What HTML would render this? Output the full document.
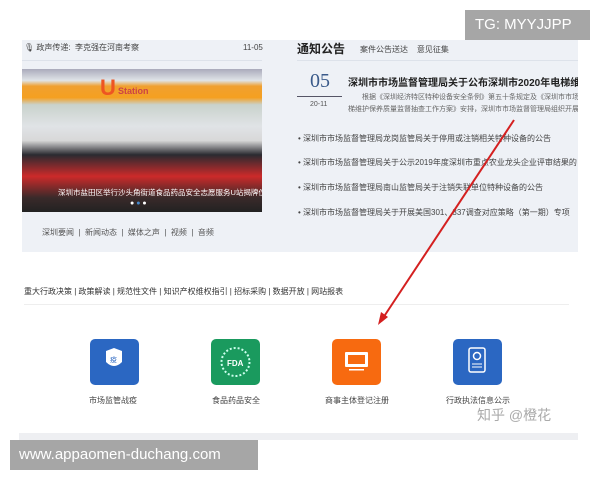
<!DOCTYPE html><html><head><meta charset="utf-8"><style>
body{margin:0;width:600px;height:480px;background:#fff;position:relative;overflow:hidden;font-family:"Liberation Sans","Noto Sans CJK SC",sans-serif}
.a{position:absolute;white-space:nowrap}
.s{font-size:8px;color:#444}
</style></head><body>
<div class="a" style="left:22px;top:40px;width:556px;height:212px;background:#eef1f6"></div>
<div class="a" style="left:19px;top:433px;width:559px;height:7px;background:#eeeff2"></div>
<div class="a s" style="left:24px;top:42px">🎙 政声传递:&nbsp; 李克强在河南考察</div>
<div class="a s" style="left:243px;top:43px">11-05</div>
<div class="a" style="left:22px;top:60px;width:240px;height:1px;background:#dde2ea"></div>
<div class="a" style="left:22px;top:69px;width:240px;height:143px;overflow:hidden;background:linear-gradient(180deg,#aab 0,#dfe4e8 8%,#f0a030 12%,#f5a020 20%,#c9d2cc 25%,#e0e3e6 40%,#d8d8d8 50%,#2a2a30 60%,#cc2a2a 75%,#3a2a2a 90%,#222 100%)">
<div class="a" style="left:78px;top:6px;font-size:22px;color:#e52;font-weight:bold">U</div>
<div class="a" style="left:96px;top:17px;font-size:9px;color:#c44;font-weight:bold">Station</div>
<div class="a" style="left:36px;top:118px;font-size:7.5px;color:#fff">深圳市盐田区举行沙头角街道食品药品安全志愿服务U站揭牌仪式</div>
<div class="a" style="left:108px;top:131px;font-size:7px;color:#fff">● <span style="color:#48c">●</span> ●</div>
</div>
<div class="a s" style="left:42px;top:227px;color:#555">深圳要闻 &nbsp;|&nbsp; 新闻动态 &nbsp;|&nbsp; 媒体之声 &nbsp;|&nbsp; 视频 &nbsp;|&nbsp; 音频</div>
<div class="a" style="left:297px;top:40px;font-size:12px;font-weight:bold;color:#222">通知公告</div>
<div class="a s" style="left:360px;top:44px">案件公告送达 &nbsp;&nbsp; 意见征集</div>
<div class="a" style="left:297px;top:60px;width:281px;height:1px;background:#dde2ea"></div>
<div class="a" style="left:310px;top:70px;font-size:20px;color:#3a5a8a;font-family:'Liberation Serif',serif">05</div>
<div class="a" style="left:297px;top:96px;width:45px;height:1px;background:#556"></div>
<div class="a" style="left:310px;top:101px;font-size:7px;color:#555">20-11</div>
<div class="a" style="left:297px;top:60px;width:281px;height:180px;overflow:hidden">
<div class="a" style="left:51px;top:14px;font-size:10px;font-weight:bold;color:#222">深圳市市场监督管理局关于公布深圳市2020年电梯维护保</div>
<div class="a" style="left:65px;top:32px;font-size:7px;color:#666">根据《深圳经济特区特种设备安全条例》第五十条规定及《深圳市市场</div>
<div class="a" style="left:51px;top:44px;font-size:7px;color:#666">梯维护保养质量监督抽查工作方案》安排，深圳市市场监督管理局组织开展</div>
<div class="a s" style="left:1px;top:73px">• 深圳市市场监督管理局龙岗监管局关于停用或注销相关特种设备的公告</div>
<div class="a s" style="left:1px;top:97px">• 深圳市市场监督管理局关于公示2019年度深圳市重点农业龙头企业评审结果的</div>
<div class="a s" style="left:1px;top:122px">• 深圳市市场监督管理局南山监管局关于注销失联单位特种设备的公告</div>
<div class="a s" style="left:1px;top:147px">• 深圳市市场监督管理局关于开展美国301、337调查对应策略（第一期）专项</div>
</div>
<div class="a s" style="left:24px;top:286px;color:#333">重大行政决策 | 政策解读 | 规范性文件 | 知识产权维权指引 | 招标采购 | 数据开放 | 网站报表</div>
<div class="a" style="left:24px;top:304px;width:545px;height:1px;background:#eee"></div>
<div class="a" style="left:90px;top:339px;width:49px;height:46px;background:#2b67c2;border-radius:5px"></div>
<div class="a" style="left:211px;top:339px;width:49px;height:46px;background:#1a9a5e;border-radius:5px"></div>
<div class="a" style="left:332px;top:339px;width:49px;height:46px;background:#f76a10;border-radius:5px"></div>
<div class="a" style="left:453px;top:339px;width:49px;height:46px;background:#2b67c2;border-radius:5px"></div>
<svg class="a" style="left:0;top:0" width="600" height="480">
<path d="M106 351 L114 348 L122 351 L122 362 Q114 370 106 362Z" fill="#fff"/><text x="110" y="362" font-size="7" fill="#2b67c2">疫</text>
<circle cx="235.5" cy="362" r="14" fill="none" stroke="#cfe" stroke-width="2" stroke-dasharray="2 2"/><text x="227" y="366" font-size="8" font-weight="bold" fill="#fff" font-family="Liberation Sans">FDA</text>
<rect x="345" y="352" width="23" height="15" rx="1" fill="#fff"/><rect x="348" y="355" width="17" height="9" fill="#f76a10"/><rect x="349" y="369" width="15" height="1.5" fill="#fff"/>
<rect x="469" y="348" width="16" height="24" rx="2" fill="none" stroke="#fff" stroke-width="1.5"/><circle cx="477" cy="356" r="3.5" fill="none" stroke="#fff" stroke-width="1.5"/><path d="M472 364h10M472 367h10" stroke="#fff"/>
<line x1="514" y1="120" x2="383" y2="318" stroke="#d42020" stroke-width="2"/><path d="M378 325 L381 312 L388 317Z" fill="#d42020"/>
</svg>
<div class="a s" style="left:89px;top:395px">市场监管战疫</div>
<div class="a s" style="left:212px;top:395px">食品药品安全</div>
<div class="a s" style="left:325px;top:395px">商事主体登记注册</div>
<div class="a s" style="left:446px;top:395px">行政执法信息公示</div>
<div class="a" style="left:477px;top:405px;font-size:14px;color:#aaa">知乎 @橙花</div>
<div class="a" style="left:10px;top:440px;width:248px;height:30px;background:#a6a6a6"></div>
<div class="a" style="left:19px;top:446px;font-size:15px;color:#fff">www.appaomen-duchang.com</div>
<div class="a" style="left:465px;top:10px;width:125px;height:30px;background:#a6a6a6"></div>
<div class="a" style="left:475px;top:16px;font-size:15px;color:#fff">TG: MYYJJPP</div>
</body></html>
